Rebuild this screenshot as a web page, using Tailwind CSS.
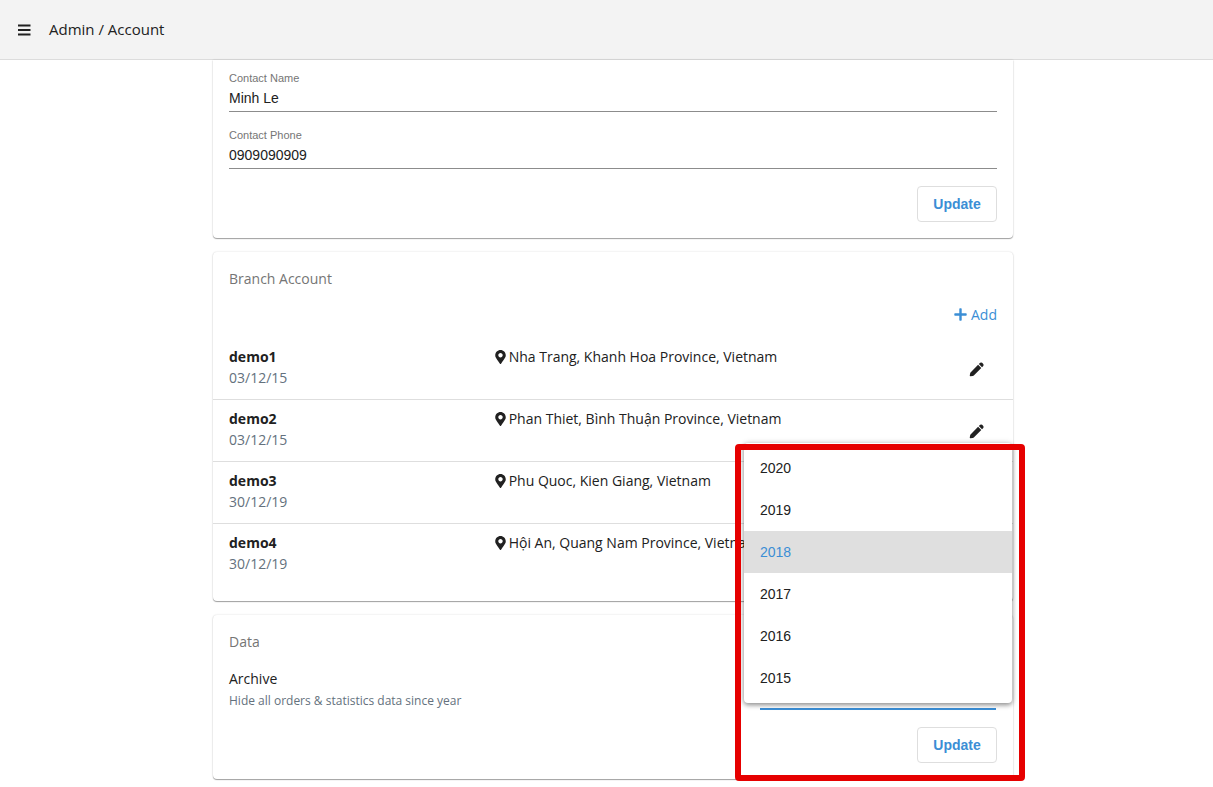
<!DOCTYPE html>
<html lang="en">
<head>
<meta charset="utf-8">
<title>Admin / Account</title>
<script src="https://cdn.jsdelivr.net/npm/@tailwindcss/browser@4"></script>
</head>
<body class="bg-white font-['Open_Sans','Noto_Sans',sans-serif] text-sm leading-[21px] text-[#212121]">
<svg class="hidden" aria-hidden="true">
  <symbol id="pin" viewBox="0 0 384 512"><path fill="currentColor" d="M172.3 501.7C27 291 0 269.400 0 192 0 86 86 0 192 0s192 86 192 192c0 77.400-27 99-172.300 309.700-9.500 13.800-29.900 13.800-39.400 0zM192 272c44.200 0 80-35.800 80-80s-35.800-80-80-80-80 35.800-80 80 35.800 80 80 80z"/></symbol>
  <symbol id="pencil" viewBox="0 0 16 16"><path fill="currentColor" d="M9.700 3 13.100 6.400 5.400 14.100Q4.800 14.700 4 14.800L1.600 15.200Q.7 15.300.8 14.400L1.200 12.200Q1.300 11.400 1.900 10.800ZM10.500 2.200 11.900.9Q13 0 14 .9L15.200 2.100Q16 3.100 15.200 4.200L13.900 5.600Z"/></symbol>
</svg>

<header class="flex h-[60px] items-center border-b border-[#dcdcdc] bg-[#f3f3f3] pl-[18px]">
  <button type="button" aria-label="Open menu" class="mr-[18px] block">
    <svg class="block h-3 w-[13px]" viewBox="0 0 13 12" fill="#212121"><path d="M0 .5h12.500v2H0zM0 5h12.500v2H0zM0 9.500h12.500v2H0z"/></svg>
  </button>
  <h1 class="text-[15px]">Admin / Account</h1>
</header>

<main class="pb-2 pl-[13px]">
  <div class="mx-auto flex max-w-[800px] flex-col gap-[14px]">

    <form class="rounded-b bg-white px-4 pt-[11px] pb-4 font-['Liberation_Sans',Arial,sans-serif] shadow-[0_1px_1px_rgba(0,0,0,0.35),0_0_2px_rgba(0,0,0,0.16)]">
      <div>
        <label for="name" class="block text-[11px] leading-[14px] text-[#757575]">Contact Name</label>
        <input id="name" type="text" value="Minh Le" class="block h-[27px] w-full border-b border-[#8c8c8c] text-sm outline-none">
      </div>
      <div class="mt-4 mb-[17px]">
        <label for="phone" class="block text-[11px] leading-[14px] text-[#757575]">Contact Phone</label>
        <input id="phone" type="text" value="0909090909" class="block h-[27px] w-full border-b border-[#8c8c8c] text-sm outline-none">
      </div>
      <div class="flex justify-end">
        <button type="button" class="h-9 w-20 rounded border border-[#dedede] font-bold text-[#3b8ed5]">Update</button>
      </div>
    </form>

    <section class="rounded bg-white pt-4 pb-4 shadow-[0_1px_1px_rgba(0,0,0,0.35),0_0_2px_rgba(0,0,0,0.16)]">
      <h2 class="px-4 text-[#757575]">Branch Account</h2>
      <div class="mt-2 mb-1.5 flex justify-end px-4">
        <button type="button" class="flex h-[35px] items-center gap-1 text-[#3b8ed5]">
          <svg class="size-[13px]" viewBox="0 0 13 13" fill="currentColor"><path d="M5.300 1q0-.7.7-.7h1q.7 0 .7.700v4.300H12q.7 0 .7.700v1q0 .7-.7.700H7.700V12q0 .7-.7.700H6q-.7 0-.7-.7V7.700H1Q.3 7.700.3 7V6q0-.7.7-.7h4.300z"/></svg>
          Add
        </button>
      </div>
      <ul>
        <li class="grid grid-cols-3 border-b border-[#dedede] pt-2 pb-[11px]">
          <div class="px-4"><p class="font-bold">demo1</p><p class="text-[#64717d]">03/12/15</p></div>
          <p class="flex h-[21px] items-center gap-[3px] pl-[15px] whitespace-nowrap"><svg class="h-3.5 w-[11px] shrink-0"><use href="#pin"/></svg>Nha Trang, Khanh Hoa Province, Vietnam</p>
          <div class="flex items-center justify-end px-4 pt-1"><button type="button" aria-label="Edit demo1" class="flex h-9 w-10 items-center justify-center"><svg class="size-[15px]"><use href="#pencil"/></svg></button></div>
        </li>
        <li class="grid grid-cols-3 border-b border-[#dedede] pt-2 pb-[11px]">
          <div class="px-4"><p class="font-bold">demo2</p><p class="text-[#64717d]">03/12/15</p></div>
          <p class="flex h-[21px] items-center gap-[3px] pl-[15px] whitespace-nowrap"><svg class="h-3.5 w-[11px] shrink-0"><use href="#pin"/></svg>Phan Thiet, Bình Thuận Province, Vietnam</p>
          <div class="flex items-center justify-end px-4 pt-1"><button type="button" aria-label="Edit demo2" class="flex h-9 w-10 items-center justify-center"><svg class="size-[15px]"><use href="#pencil"/></svg></button></div>
        </li>
        <li class="grid grid-cols-3 border-b border-[#dedede] pt-2 pb-[11px]">
          <div class="px-4"><p class="font-bold">demo3</p><p class="text-[#64717d]">30/12/19</p></div>
          <p class="flex h-[21px] items-center gap-[3px] pl-[15px] whitespace-nowrap"><svg class="h-3.5 w-[11px] shrink-0"><use href="#pin"/></svg>Phu Quoc, Kien Giang, Vietnam</p>
        </li>
        <li class="grid grid-cols-3 pt-2 pb-[11px]">
          <div class="px-4"><p class="font-bold">demo4</p><p class="text-[#64717d]">30/12/19</p></div>
          <p class="flex h-[21px] items-center gap-[3px] pl-[15px] whitespace-nowrap"><svg class="h-3.5 w-[11px] shrink-0"><use href="#pin"/></svg>Hội An, Quang Nam Province, Vietnam</p>
        </li>
      </ul>
    </section>

    <section class="relative rounded bg-white p-4 shadow-[0_1px_1px_rgba(0,0,0,0.35),0_0_2px_rgba(0,0,0,0.16)]">
      <h2 class="text-[#757575]">Data</h2>
      <div class="mt-4 flex items-start justify-between">
        <div>
          <label for="year" class="block">Archive</label>
          <p class="mt-px text-xs leading-[21px] text-[#64717d]">Hide all orders &amp; statistics data since year</p>
        </div>
        <div class="relative w-[237px] pr-px font-['Liberation_Sans',Arial,sans-serif]">
          <select id="year" class="block h-[42px] w-full appearance-none border-b-2 border-[#3b8ed5] outline-none">
            <option>2018</option>
          </select>
          <ul role="listbox" aria-label="Year" class="absolute -right-[15px] bottom-[7px] -left-4 rounded bg-white py-1 shadow-[0_2px_5px_rgba(0,0,0,0.4),0_0_6px_rgba(0,0,0,0.14)]">
            <li role="option" class="flex h-[42px] items-center px-4">2020</li>
            <li role="option" class="flex h-[42px] items-center px-4">2019</li>
            <li role="option" aria-selected="true" class="flex h-[42px] items-center bg-[#dfdfdf] px-4 text-[#3b8ed5]">2018</li>
            <li role="option" class="flex h-[42px] items-center px-4">2017</li>
            <li role="option" class="flex h-[42px] items-center px-4">2016</li>
            <li role="option" class="flex h-[42px] items-center px-4">2015</li>
          </ul>
        </div>
      </div>
      <div class="mt-4 flex justify-end font-['Liberation_Sans',Arial,sans-serif]">
        <button type="button" class="h-9 w-20 rounded border border-[#dedede] font-bold text-[#3b8ed5]">Update</button>
      </div>
      <div class="pointer-events-none absolute -top-[171px] -right-3 -bottom-0.5 w-[290px] rounded-sm border-6 border-[#e60000]"></div>
    </section>
  </div>
</main>
</body>
</html>
